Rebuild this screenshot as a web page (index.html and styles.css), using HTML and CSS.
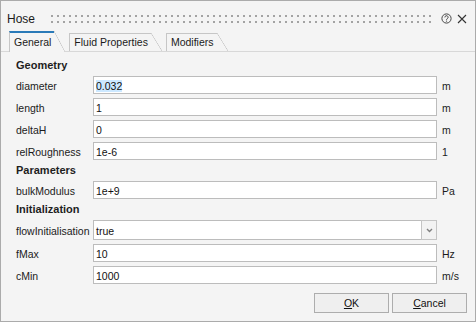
FILE: index.html
```html
<!DOCTYPE html>
<html>
<head>
<meta charset="utf-8">
<link rel="stylesheet" href="styles.css">
</head>
<body>
<div class="window">
  <div class="titlebar">
    <span class="title">Hose</span>
    <span class="grip"></span>
    <svg class="help" width="11" height="11" viewBox="0 0 11 11"><circle cx="5.5" cy="5.5" r="4.6" fill="none" stroke="#454545" stroke-width="1"/><path d="M3.9 4.4 a1.6 1.6 0 1 1 2.4 1.3 c-0.5 0.3 -0.8 0.6 -0.8 1.2" fill="none" stroke="#454545" stroke-width="1"/><circle cx="5.5" cy="8.1" r="0.65" fill="#454545"/></svg>
    <svg class="close" width="10" height="10" viewBox="0 0 10 10"><path d="M1 1 L9 9 M9 1 L1 9" stroke="#333" stroke-width="1.1" fill="none"/></svg>
  </div>
  <div class="tabs">
    <div class="tab active">General</div>
    <div class="tab">Fluid Properties</div>
    <div class="tab">Modifiers</div>
  </div>
  <div class="panel">
    <div class="form">
      <div class="section">Geometry</div>
      <div class="label">diameter</div><div class="field"><span class="sel">0.032</span></div><div class="unit">m</div>
      <div class="label">length</div><div class="field">1</div><div class="unit">m</div>
      <div class="label">deltaH</div><div class="field">0</div><div class="unit">m</div>
      <div class="label">relRoughness</div><div class="field">1e-6</div><div class="unit">1</div>
      <div class="section">Parameters</div>
      <div class="label">bulkModulus</div><div class="field">1e+9</div><div class="unit">Pa</div>
      <div class="section">Initialization</div>
      <div class="label tall">flowInitialisation</div>
      <div class="combo"><div class="combo-text">true</div><div class="combo-btn"><svg width="7" height="5" viewBox="0 0 7 5"><path d="M1 1 L3.5 3.5 L6 1" fill="none" stroke="#808080" stroke-width="1.4"/></svg></div></div>
      <div class="unit"></div>
      <div class="label">fMax</div><div class="field">10</div><div class="unit">Hz</div>
      <div class="label">cMin</div><div class="field">1000</div><div class="unit">m/s</div>
    </div>
    <div class="buttons">
      <button class="btn"><u>O</u>K</button>
      <button class="btn"><u>C</u>ancel</button>
    </div>
  </div>
</div>
</body>
</html>
```
FILE: styles.css
```css
html, body {
  margin: 0;
  padding: 0;
  background: #f4f4f4;
}
.window {
  width: 476px;
  height: 322px;
  box-sizing: border-box;
  border: 1px solid #ababab;
  background: #f4f4f4;
  font-family: "Liberation Sans", Arial, sans-serif;
  font-size: 10.5px;
  color: #1b1b1b;
  display: flex;
  flex-direction: column;
}
.titlebar {
  height: 30px;
  box-sizing: border-box;
  padding: 4px 8px 0 6px;
  display: flex;
  align-items: center;
}
.title {
  font-size: 12px;
  line-height: 16px;
  margin-top: 1px;
  color: #1a1a1a;
}
.grip {
  flex: 1;
  height: 8px;
  margin: 2px 8px 0 16px;
  background-image:
    linear-gradient(to right, transparent 2px, #f4f4f4 2px),
    linear-gradient(to bottom, #a3a3a3 2px, transparent 2px);
  background-size: 6px 6px;
}
.help {
  display: block;
}
.close {
  display: block;
  margin-left: 5px;
  margin-top: 1px;
}
.tabs {
  height: 20px;
  display: flex;
  align-items: flex-end;
  padding-left: 8px;
  border-bottom: 1px solid #d8d8d8;
}
.tab {
  position: relative;
  height: 17px;
  line-height: 17px;
  padding: 0 3px 0 4px;
  margin-right: 15px;
  border-top: 1px solid #c6c6c6;
  border-left: 1px solid #c6c6c6;
  white-space: nowrap;
}
.tab::after {
  content: "";
  position: absolute;
  top: -1px;
  bottom: 0;
  left: 100%;
  width: 11px;
  background: linear-gradient(to top right, transparent calc(50% - 0.6px), #c6c6c6 50%, transparent calc(50% + 0.6px));
}
.tab.active {
  height: 18px;
  line-height: 18px;
  border-top: 2px solid #2a7ab8;
  margin-bottom: -1px;
  padding-bottom: 1px;
  background: #f4f4f4;
  z-index: 1;
}
.tab.active::after {
  top: -2px;
  bottom: 0;
  width: 11px;
  background: linear-gradient(to top right, #f4f4f4 calc(50% - 0.6px), #c6c6c6 50%, transparent calc(50% + 0.6px));
}
.panel {
  flex: 1;
  padding: 7px 8px 0 15px;
}
.form {
  display: grid;
  grid-template-columns: 77px 344px 1fr;
  row-gap: 4px;
}
.section {
  grid-column: 1 / -1;
  font-weight: bold;
  font-size: 11px;
  height: 13px;
  line-height: 13px;
  color: #1e1e1e;
}
.label {
  height: 18px;
  box-sizing: border-box;
  padding-top: 2px;
  line-height: 16px;
  white-space: nowrap;
}
.label.tall {
  height: 20px;
  padding-top: 3px;
}
.field {
  height: 18px;
  box-sizing: border-box;
  border: 1px solid #bcbcbc;
  background: #ffffff;
  padding: 1px 0 0 2px;
  line-height: 16px;
  color: #111;
}
.sel {
  background: #cce8ff;
}
.unit {
  padding: 2px 0 0 5px;
  line-height: 16px;
  height: 18px;
  box-sizing: border-box;
}
.combo {
  height: 20px;
  display: flex;
}
.combo-text {
  flex: 1;
  box-sizing: border-box;
  border: 1px solid #bcbcbc;
  background: #ffffff;
  padding: 2px 0 0 2px;
  line-height: 16px;
  color: #111;
}
.combo-btn {
  width: 16px;
  box-sizing: border-box;
  border: 1px solid #c4c4c4;
  margin-left: -1px;
  background: #f2f2f2;
  display: flex;
  align-items: center;
  justify-content: center;
}
.combo-btn svg {
  display: block;
}
.buttons {
  display: flex;
  justify-content: flex-end;
  gap: 3px;
  margin-top: 9px;
}
.btn {
  width: 75px;
  height: 20px;
  box-sizing: border-box;
  border: 1px solid #adadad;
  background: #efefef;
  font-family: "Liberation Sans", Arial, sans-serif;
  font-size: 10.5px;
  color: #111;
  padding: 0;
  line-height: 18px;
  border-radius: 0;
}
.btn u {
  text-underline-offset: 1px;
}
```
